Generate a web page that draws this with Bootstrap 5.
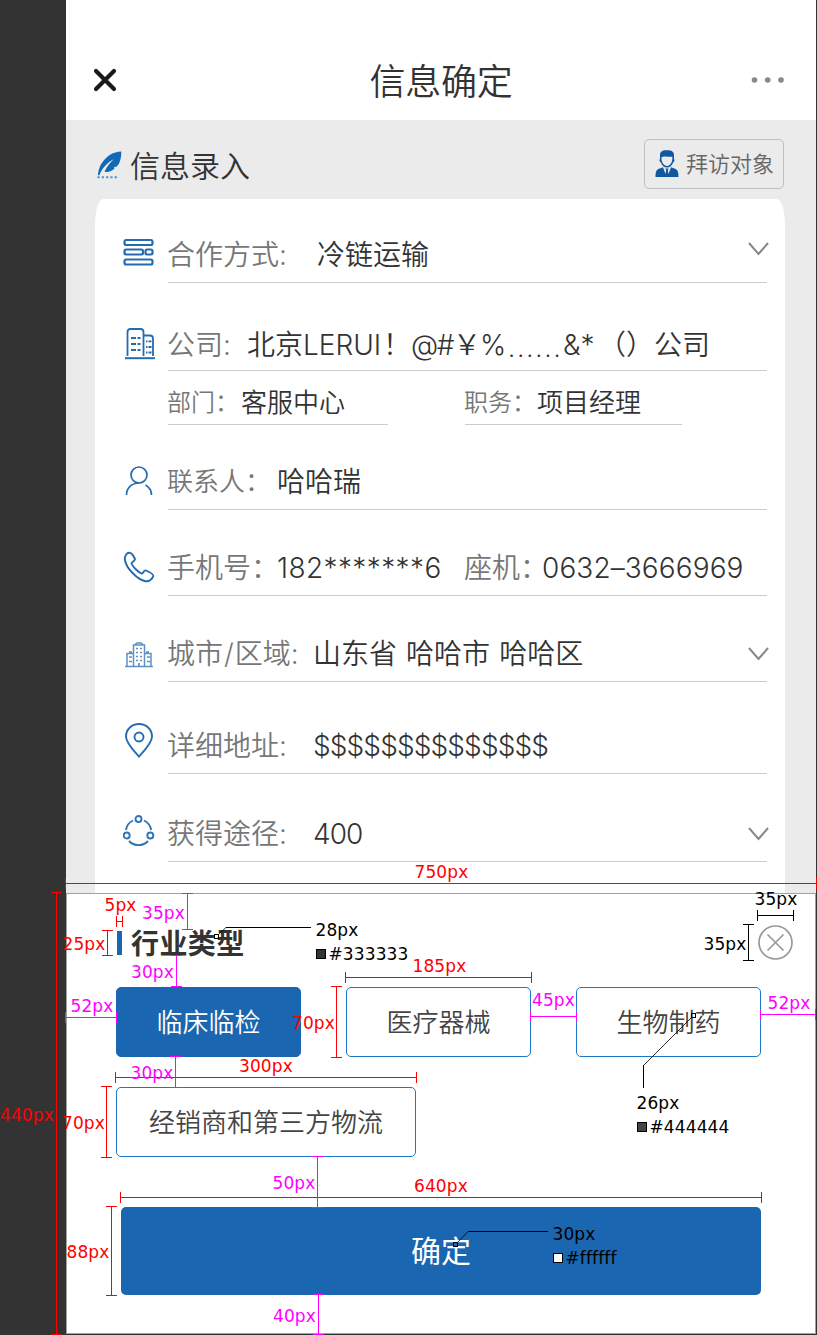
<!DOCTYPE html>
<html lang="zh-CN">
<head>
<meta charset="utf-8">
<meta name="viewport" content="width=device-width, initial-scale=1">
<title>信息确定</title>
<link href="https://cdn.jsdelivr.net/npm/bootstrap@5.3.0/dist/css/bootstrap.min.css" rel="stylesheet">
<style>
body{background:#333;color:#333;font-family:Inter,"Noto Sans CJK SC",sans-serif;font-weight:350;width:817px;height:1335px;overflow:hidden}
svg{display:block;flex:none}
.screen{width:750px;height:1334px;margin-left:66px;background:#ebebeb}
.topbar{height:120px;padding:40px 31px 0 27px;background:#fff}
.topbar h1{font-size:36px;line-height:76px;margin:0;padding:4px 0 0 14px;font-weight:350;letter-spacing:-.2px}
.section-head{height:79px;padding:19px 32px 10px 30px}
.section-head h2{font-size:30px;line-height:46px;margin:0 0 0 6px;padding-top:4px;font-weight:350}
.visit{width:140px;height:50px;border:1px solid #bfbfbf;border-radius:5px;padding:0 0 0 10px;font-size:22px;font-weight:350;color:#666;gap:7px}
.form-card{width:690px;height:694px;margin-left:29px;padding:0 0 0 28px;background:#fff;border-radius:8px 8px 0 0/26px 26px 0 0}
.ico{width:32px;margin-right:13px}
.field{width:599px;border-bottom:1px solid #ccc;padding-bottom:7px;font-size:28px;line-height:40px;white-space:nowrap}
.field .lb{color:#777;flex:none;margin-left:-1px}
.field .val{flex:none}
.num{letter-spacing:.1px;font-weight:300}
.num.stars{letter-spacing:.4px}
.num.dollars{letter-spacing:-.9px}
.addr{word-spacing:1.2px}
.slash{margin:0 1px}
.r1{height:84px}.r2{height:88px}.r2b{height:54px;margin-left:45px}.r3{height:85px}.r4{height:86px}.r6{height:92px}
.r2 .field{padding-bottom:5px}
.r3 .field,.r4 .field{padding-bottom:7px}
.r6 .field{padding-bottom:7px}
.r7 .field{padding-bottom:7px}
.w150{width:150px}.w80{width:80px}.w110{width:110px}.w146{width:146px}.w188{width:188px}.w78{width:78px}
.half{border-bottom:1px solid #ccc;font-size:26px;line-height:40px;padding-bottom:1px;white-space:nowrap}
.half .lb{font-size:24px;color:#777;width:73px;margin-left:-1px;margin-right:1px}
.half.a{width:220px;margin-right:77px}.half.b{width:217px}
.half.b .lb{margin-right:0}
.r3 .lb{font-size:26px}
.seg span{display:inline-block}
.s1{width:56px}.s2{width:80px;font-weight:300}.s3{width:28px}.s4{width:42px;letter-spacing:-1.5px;font-weight:300}.s5{width:27px}.s6{width:27px;font-weight:300}.s7{width:56px;font-size:33px;font-weight:200}.s8{width:35px;font-weight:300}.s9{width:56px}
.arrow{margin:0 -3px 12px auto}
.r1 .arrow{margin-bottom:18px}
.sheet{height:441px;background:#fff;border:1px solid #a0a0a0;padding:31px 54px 0 49px}
.sheet-title{height:35px;font-size:28px;font-weight:600;line-height:35px;margin-bottom:27px}
.sheet-title span{padding-top:3px;letter-spacing:.4px}
.sheet-title i{width:5px;height:24px;background:#1b66b0;margin:0 9px 0 1px}
.sheet-title svg{margin-right:-33px}
.opt{height:70px;width:185px;border:1px solid #1c78c8;border-radius:5px;font-size:26px;font-weight:350;color:#444;background:#fff;padding:0}
.opt.sel{background:#1b66b0;border-color:#1b66b0;color:#fff}
.opt.long{width:300px;margin-top:30px}
.ok{display:block;width:640px;height:88px;margin:50px 0 0 5px;border-radius:5px;background:#1b66b0;color:#fff;font-size:30px;font-weight:400;padding:0}
.marks{left:0;top:0;font:17px "DejaVu Sans",sans-serif;letter-spacing:.12px}
</style>
</head>
<body class="position-relative">
<main class="screen">
  <header class="topbar d-flex align-items-center justify-content-between">
    <svg width="24" height="24" viewBox="0 0 24 24" fill="none" stroke="#1a1a1a" stroke-width="4.200" stroke-linecap="round"><path d="M3 3L21 21M21 3L3 21"/></svg>
    <h1>信息确定</h1>
    <svg width="34" height="8" viewBox="0 0 34 8" fill="#888"><circle cx="3.500" cy="4" r="2.800"/><circle cx="16.700" cy="4" r="2.800"/><circle cx="30" cy="4" r="2.800"/></svg>
  </header>

  <section class="section-head d-flex align-items-center">
    <svg width="28" height="30" viewBox="0 0 28 30"><path d="M2 26.500C2 22 4 16 7 12.500C11 7 17 2.800 25.300 2.500C25.300 9 24 14.500 20.800 17.500L18 18.200L18.500 19.500C15.500 22.500 11.500 23.800 8.500 22.500C11 17.500 14 13.500 18 10C11 13.500 6 19.500 3.500 26Z" fill="#1468b8"/><path d="M1.500 28.200H22" stroke="#4e94d2" stroke-width="2" stroke-dasharray="2.200 2.100"/></svg>
    <h2>信息录入</h2>
    <button class="visit btn d-flex align-items-center ms-auto">
      <svg width="24" height="28" viewBox="0 0 24 28"><path d="M5 9V5C5 1.500 7.500 0 12 .300C16 .200 19 1.500 19 5V9C20 9.500 19.500 12 18.300 12.200C17 15.500 14.800 17.500 12 17.500S7 15.500 5.700 12.200C4.500 12 4 9.500 5 9Z" fill="#10599f"/><path d="M6.500 7.200C9 5.800 13 7.200 17.300 6.800C18 12 15 16 12 16S6 12 6.500 7.200Z" fill="#ebebeb"/><path d="M.5 27C.5 22 1.500 19.500 4 18.800L8 17.300L10.500 24L11.200 20L10.300 18.500H13.700L12.800 20L13.500 24L16 17.300L20 18.800C22.500 19.500 23.500 22 23.500 27Z" fill="#10599f"/></svg>
      拜访对象
    </button>
  </section>

  <section class="form-card">
    <div class="r1 d-flex align-items-end">
      <svg class="ico" width="32" height="45" viewBox="0 0 32 45" fill="none" stroke="#246bb0" stroke-width="2.200"><rect x="1.500" y="2" width="28" height="5" rx="1.800"/><rect x="1.500" y="11.500" width="18.500" height="5" rx="1.800"/><rect x="22.500" y="11.500" width="7" height="5" rx="1.800"/><rect x="1.500" y="21.500" width="28" height="5" rx="1.800"/></svg>
      <div class="field d-flex align-items-end"><span class="lb w150">合作方式:</span><span class="val">冷链运输</span>
        <svg class="arrow" width="22" height="16" viewBox="0 0 22 16" fill="none" stroke="#888" stroke-width="2"><path d="M1 2L10.500 13L20 2"/></svg></div>
    </div>
    <div class="r2 d-flex align-items-end">
      <svg class="ico" width="32" height="44" viewBox="0 0 32 44" fill="none" stroke="#246bb0" stroke-width="1.800"><path d="M4.500 29V5Q4.500 2 7.500 2H17.500Q20.500 2 20.500 5V29M20.500 8.500H27Q30 8.500 30 11.500V29"/><path d="M2 31.200H33" stroke-width="2"/><path d="M8 11H17.500M8 17H17.500M8 23H17.500" stroke-dasharray="5 1.500 3 20"/><path d="M23 14.300H28.500M23 20H28.500M23 25.500H28.500" stroke-dasharray="1.500 1 4 20"/></svg>
      <div class="field d-flex align-items-end"><span class="lb w80">公司:</span><span class="val seg d-flex"><span class="s1">北京</span><span class="s2">LERUI</span><span class="s3">！</span><span class="s4">@#</span><span class="s5">￥</span><span class="s6">%</span><span class="s7">……</span><span class="s8">&amp;*</span><span class="s9">（）</span><span>公司</span></span></div>
    </div>
    <div class="r2b d-flex align-items-end">
      <div class="half a d-flex"><span class="lb">部门：</span><span>客服中心</span></div>
      <div class="half b d-flex"><span class="lb">职务：</span><span>项目经理</span></div>
    </div>
    <div class="r3 d-flex align-items-end">
      <svg class="ico" width="32" height="45" viewBox="0 0 32 45" fill="none" stroke="#246bb0" stroke-width="1.700"><circle cx="16" cy="10" r="8"/><path d="M3.500 30C3.500 23 8.500 18 16 18M22.500 20C26 22 28.500 25.500 28.500 30"/></svg>
      <div class="field d-flex align-items-end"><span class="lb w110">联系人：</span><span class="val">哈哈瑞</span></div>
    </div>
    <div class="r4 d-flex align-items-end">
      <svg class="ico" width="32" height="46" viewBox="0 0 32 46" fill="none" stroke="#246bb0" stroke-width="1.900" stroke-linejoin="round"><path d="M6 2.800C8 2.200 10 5 11.800 8.500C13 11 8 12 8.500 13.500C10 17 15 22 18.500 23.500C20.500 24.300 20.500 19.500 23 20.500C26.500 22 30.500 24.500 30.300 26C29.500 29 26 31.800 22.500 31.200C15 30 3 18.500 1.800 9.500C1.500 6 4 2.800 6 2.800Z"/></svg>
      <div class="field d-flex align-items-end"><span class="lb w110">手机号：</span><span class="val w188 num stars">182*******6</span><span class="lb w78">座机：</span><span class="val num">0632–3666969</span></div>
    </div>
    <div class="r4 d-flex align-items-end">
      <svg class="ico" width="32" height="42" viewBox="0 0 32 42" fill="none" stroke="#5c91c4" stroke-width="1.500"><path d="M2 26.500H30M4 26V13.500H10M28 26V13.500H22M10.500 26V5H21.500V26M12 4.500L14 3H18L20 4.500M6 12H9M23 12H26"/><path d="M13 8.500H19M13 12.500H19M13 16.500H19M13 20.500H19" stroke-width="1.700" stroke-dasharray="2 2"/><path d="M6 17H9M6 21.500H9M24 17H27M24 21.500H27M16 23V26" stroke-width="1.700"/></svg>
      <div class="field d-flex align-items-end"><span class="lb w146">城市<span class="slash">/</span>区域:</span><span class="val addr">山东省 哈哈市 哈哈区</span>
        <svg class="arrow" width="22" height="16" viewBox="0 0 22 16" fill="none" stroke="#888" stroke-width="2"><path d="M1 2L10.500 13L20 2"/></svg></div>
    </div>
    <div class="r6 d-flex align-items-end">
      <svg class="ico" width="32" height="52" viewBox="0 0 32 52" fill="none" stroke="#246bb0" stroke-width="1.900"><path d="M16 34.500C11 29 3 21 3 14.500C3 7 9 2 16 2S29 7 29 14.500C29 21 21 29 16 34.500Z"/><circle cx="16" cy="15" r="4.500"/></svg>
      <div class="field d-flex align-items-end"><span class="lb w146">详细地址:</span><span class="val num dollars">$$$$$$$$$$$$$$</span></div>
    </div>
    <div class="r2 r7 d-flex align-items-end">
      <svg class="ico" width="32" height="48" viewBox="0 0 32 48" fill="none" stroke="#2f74b6" stroke-width="1.900"><circle cx="15.500" cy="5" r="3"/><circle cx="3.700" cy="21.500" r="3"/><circle cx="27.300" cy="21.500" r="3"/><path d="M10 6.500C6 8.500 3.500 12 3 16M21 6.500C25 8.500 27.500 12 28.200 16M6 27C11 32.500 20 32.500 25 27"/></svg>
      <div class="field d-flex align-items-end"><span class="lb w146">获得途径:</span><span class="val num dollars">400</span>
        <svg class="arrow" width="22" height="16" viewBox="0 0 22 16" fill="none" stroke="#888" stroke-width="2"><path d="M1 2L10.500 13L20 2"/></svg></div>
    </div>
  </section>

  <section class="sheet">
    <div class="sheet-title d-flex align-items-center"><i></i><span>行业类型</span>
      <svg class="ms-auto" width="36" height="36" viewBox="0 0 36 36" fill="none" stroke="#999" stroke-width="1.700"><circle cx="17.500" cy="17.500" r="16.500"/><path d="M9.500 9.500L25.500 25.500M25.500 9.500L9.500 25.500"/></svg>
    </div>
    <div class="d-flex justify-content-between">
      <button class="opt sel btn">临床临检</button>
      <button class="opt btn">医疗器械</button>
      <button class="opt btn">生物制药</button>
    </div>
    <button class="opt long btn">经销商和第三方物流</button>
    <button class="ok btn">确定</button>
  </section>
</main>

<!-- dimension marks laid over the screen -->
<svg class="marks position-absolute" width="817" height="1335" viewBox="0 0 817 1335">
  <g fill="none" stroke="#f00" shape-rendering="crispEdges">
    <path d="M65 883.500H817M65.500 878V889M816.500 878V889"/>
    <path d="M56.500 892V1335M51 892.500H62M51 1334.500H62"/>
    <path d="M116 921.500H123M116.500 916V927M122.500 916V927"/>
    <path d="M107.500 930V956M102 930.500H113M102 955.500H113"/>
    <path d="M115 1077.500H417M115.500 1072V1083M416.500 1072V1083"/>
    <path d="M106.500 1086V1158M101 1086.500H112M101 1157.500H112"/>
    <path d="M336.500 986V1058M331 986.500H342M331 1057.500H342"/>
    <path d="M345 977.500H532M345.500 972V983M531.500 972V983"/>
    <path d="M120 1197.500H762M120.500 1192V1203M761.500 1192V1203"/>
    <path d="M111.500 1206V1296M106 1206.500H117M106 1295.500H117"/>
  </g>
  <g fill="none" stroke="#f0f" shape-rendering="crispEdges">
    <path d="M187.500 893V930M182 893.500H193M182 929.500H193"/>
    <path d="M176.500 955V987M171 955.500H182M171 986.500H182"/>
    <path d="M65 1017.500H117M65.500 1012V1023M116.500 1012V1023"/>
    <path d="M175.500 1056V1088M170 1056.500H181M170 1087.500H181"/>
    <path d="M530 1016.500H577M530.500 1011V1022M576.500 1011V1022"/>
    <path d="M760 1014.500H816M760.500 1009V1020M815.500 1009V1020"/>
    <path d="M317.500 1156V1208M312 1156.500H323M312 1207.500H323"/>
    <path d="M318.500 1294V1335M313 1294.500H324M313 1334.500H324"/>
  </g>
  <g fill="none" stroke="#000" shape-rendering="crispEdges">
    <path d="M757 915.500H794M757.500 910V921M793.500 910V921"/>
    <path d="M748.500 924V961M743 924.500H754M743 960.500H754"/>
    <path d="M226 927.500H311M643.500 1065V1088M468 1231.500H548"/>
    <path d="M214.500 934.500h4v4h-4zM691.500 1013.500h4v4h-4zM453.500 1242.500h4v4h-4z"/>
    <path d="M316.500 949.500h9v9h-9z" fill="#333"/>
    <path d="M637.500 1122.500h9v9h-9z" fill="#444"/>
    <path d="M553.500 1253.500h9v9h-9z" fill="#fff"/>
  </g>
  <path d="M218.500 934.500L226 927.500M691.500 1017.500L643.500 1065.500M457.500 1242.500L468 1231.500" fill="none" stroke="#000" stroke-width=".8"/>
  <g fill="#f00">
    <text x="414.500" y="878">750px</text><text x="104.500" y="911">5px</text><text x="62.500" y="950">25px</text><text x="239" y="1072">300px</text><text x="62" y="1129">70px</text><text x="0" y="1121">440px</text><text x="292" y="1029">70px</text><text x="412.500" y="972">185px</text><text x="414" y="1192">640px</text><text x="66.500" y="1258">88px</text>
  </g>
  <g fill="#f0f">
    <text x="142" y="919">35px</text><text x="131" y="978">30px</text><text x="70.500" y="1012">52px</text><text x="130.500" y="1079">30px</text><text x="532" y="1006">45px</text><text x="767.500" y="1009">52px</text><text x="272.500" y="1189">50px</text><text x="273" y="1322">40px</text>
  </g>
  <g>
    <text x="754.500" y="905">35px</text><text x="703.500" y="950">35px</text><text x="315.500" y="936">28px</text><text x="328.500" y="960">#333333</text><text x="636.500" y="1109">26px</text><text x="649.500" y="1133">#444444</text><text x="552.500" y="1240">30px</text><text x="565.500" y="1264">#ffffff</text>
  </g>
</svg>
<script src="https://cdn.jsdelivr.net/npm/bootstrap@5.3.0/dist/js/bootstrap.bundle.min.js"></script>
</body>
</html>
